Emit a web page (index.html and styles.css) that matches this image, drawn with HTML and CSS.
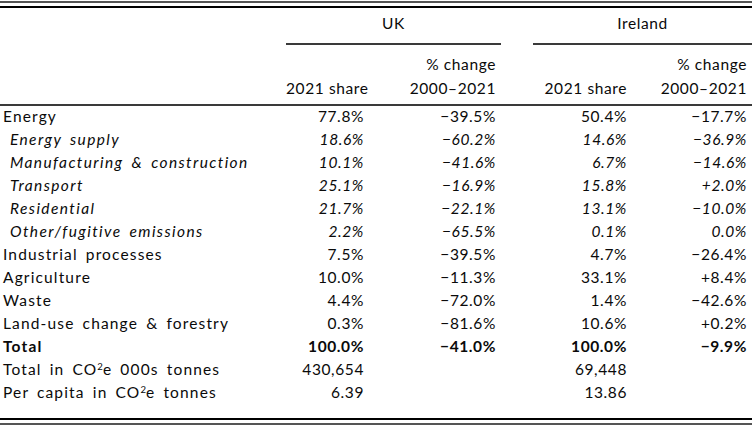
FILE: index.html
```html
<!DOCTYPE html>
<html lang="en">
<head>
<meta charset="utf-8">
<title>Emissions by sector: UK and Ireland</title>
<link rel="stylesheet" href="styles.css">
</head>
<body>
<div class="table-wrap">
<table class="emissions">
  <colgroup>
    <col class="c-label">
    <col class="c-share">
    <col class="c-change">
    <col class="c-gap">
    <col class="c-share-ie">
    <col class="c-change-ie">
  </colgroup>
  <thead>
    <tr class="head-top">
      <th></th>
      <th class="spanner" colspan="2">UK</th>
      <th></th>
      <th class="spanner" colspan="2">Ireland</th>
    </tr>
    <tr class="head-sub">
      <th></th>
      <th class="num share">2021 share</th>
      <th class="num change">% change<br>2000–2021</th>
      <th></th>
      <th class="num share-ie">2021 share</th>
      <th class="num change">% change<br>2000–2021</th>
    </tr>
  </thead>
  <tbody>
    <tr>
      <td class="label">Energy</td>
      <td class="num share">77.8%</td>
      <td class="num change">−39.5%</td>
      <td></td>
      <td class="num share-ie">50.4%</td>
      <td class="num change">−17.7%</td>
    </tr>
    <tr class="sub">
      <td class="label">Energy supply</td>
      <td class="num share">18.6%</td>
      <td class="num change">−60.2%</td>
      <td></td>
      <td class="num share-ie">14.6%</td>
      <td class="num change">−36.9%</td>
    </tr>
    <tr class="sub">
      <td class="label">Manufacturing &amp; construction</td>
      <td class="num share">10.1%</td>
      <td class="num change">−41.6%</td>
      <td></td>
      <td class="num share-ie">6.7%</td>
      <td class="num change">−14.6%</td>
    </tr>
    <tr class="sub">
      <td class="label">Transport</td>
      <td class="num share">25.1%</td>
      <td class="num change">−16.9%</td>
      <td></td>
      <td class="num share-ie">15.8%</td>
      <td class="num change">+2.0%</td>
    </tr>
    <tr class="sub">
      <td class="label">Residential</td>
      <td class="num share">21.7%</td>
      <td class="num change">−22.1%</td>
      <td></td>
      <td class="num share-ie">13.1%</td>
      <td class="num change">−10.0%</td>
    </tr>
    <tr class="sub">
      <td class="label">Other/fugitive emissions</td>
      <td class="num share">2.2%</td>
      <td class="num change">−65.5%</td>
      <td></td>
      <td class="num share-ie">0.1%</td>
      <td class="num change">0.0%</td>
    </tr>
    <tr>
      <td class="label">Industrial processes</td>
      <td class="num share">7.5%</td>
      <td class="num change">−39.5%</td>
      <td></td>
      <td class="num share-ie">4.7%</td>
      <td class="num change">−26.4%</td>
    </tr>
    <tr>
      <td class="label">Agriculture</td>
      <td class="num share">10.0%</td>
      <td class="num change">−11.3%</td>
      <td></td>
      <td class="num share-ie">33.1%</td>
      <td class="num change">+8.4%</td>
    </tr>
    <tr>
      <td class="label">Waste</td>
      <td class="num share">4.4%</td>
      <td class="num change">−72.0%</td>
      <td></td>
      <td class="num share-ie">1.4%</td>
      <td class="num change">−42.6%</td>
    </tr>
    <tr>
      <td class="label">Land-use change &amp; forestry</td>
      <td class="num share">0.3%</td>
      <td class="num change">−81.6%</td>
      <td></td>
      <td class="num share-ie">10.6%</td>
      <td class="num change">+0.2%</td>
    </tr>
    <tr class="total">
      <td class="label">Total</td>
      <td class="num share">100.0%</td>
      <td class="num change">−41.0%</td>
      <td></td>
      <td class="num share-ie">100.0%</td>
      <td class="num change">−9.9%</td>
    </tr>
    <tr>
      <td class="label">Total in CO<sup>2</sup>e 000s tonnes</td>
      <td class="num share">430,654</td>
      <td class="num change"></td>
      <td></td>
      <td class="num share-ie">69,448</td>
      <td class="num change"></td>
    </tr>
    <tr class="last">
      <td class="label">Per capita in CO<sup>2</sup>e tonnes</td>
      <td class="num share">6.39</td>
      <td class="num change"></td>
      <td></td>
      <td class="num share-ie">13.86</td>
      <td class="num change"></td>
    </tr>
  </tbody>
</table>
</div>
</body>
</html>
```

FILE: styles.css
```css
html, body {
  margin: 0;
  padding: 0;
  background: #ffffff;
}

body {
  font-family: Lato, "Liberation Sans", sans-serif;
  font-size: 15.5px;
  letter-spacing: 0.6px;
  color: #0a0a0a;
}

.table-wrap {
  width: 752px;
  margin-top: 1px;
  padding: 3px 0;
  border-top: 2px solid #555555;
  border-bottom: 2px solid #555555;
}

.emissions {
  width: 752px;
  table-layout: fixed;
  border-collapse: separate;
  border-spacing: 0;
  border-top: 2px solid #000000;
  border-bottom: 2px solid #000000;
}

.c-label { width: 286px; }
.c-share { width: 92px; }
.c-change { width: 123px; }
.c-gap { width: 32px; }
.c-share-ie { width: 107px; }
.c-change-ie { width: 112px; }

.emissions th,
.emissions td {
  padding: 0;
  font-weight: normal;
  white-space: nowrap;
}

.head-top th {
  line-height: 13px;
  padding: 9px 0 15px;
  text-align: center;
}

.head-top th.spanner {
  padding-bottom: 13px;
  border-bottom: 2px solid #3a3a3a;
}

.head-sub th {
  line-height: 24px;
  padding: 6.5px 0 4.5px;
  vertical-align: bottom;
  border-bottom: 2px solid #3a3a3a;
}

.emissions tbody td {
  line-height: 13px;
  padding-top: 4px;
  padding-bottom: 6px;
  vertical-align: top;
}

.emissions tbody tr.last td {
  padding-bottom: 19px;
}

.label {
  text-align: left;
  padding-left: 3px !important;
  letter-spacing: 1.15px;
  word-spacing: 3px;
}

.sub td {
  font-style: italic;
}

.sub .label {
  padding-left: 10px !important;
  letter-spacing: 1.4px;
}

.total td {
  font-weight: bold;
}

.num {
  text-align: right;
}

.num.share {
  padding-right: 14px !important;
}

.num.change {
  padding-right: 5px !important;
}

.num.share-ie {
  padding-right: 13px !important;
}

sup {
  font-size: 0.62em;
  line-height: 0;
  vertical-align: 0.5em;
  letter-spacing: 0;
}
```
